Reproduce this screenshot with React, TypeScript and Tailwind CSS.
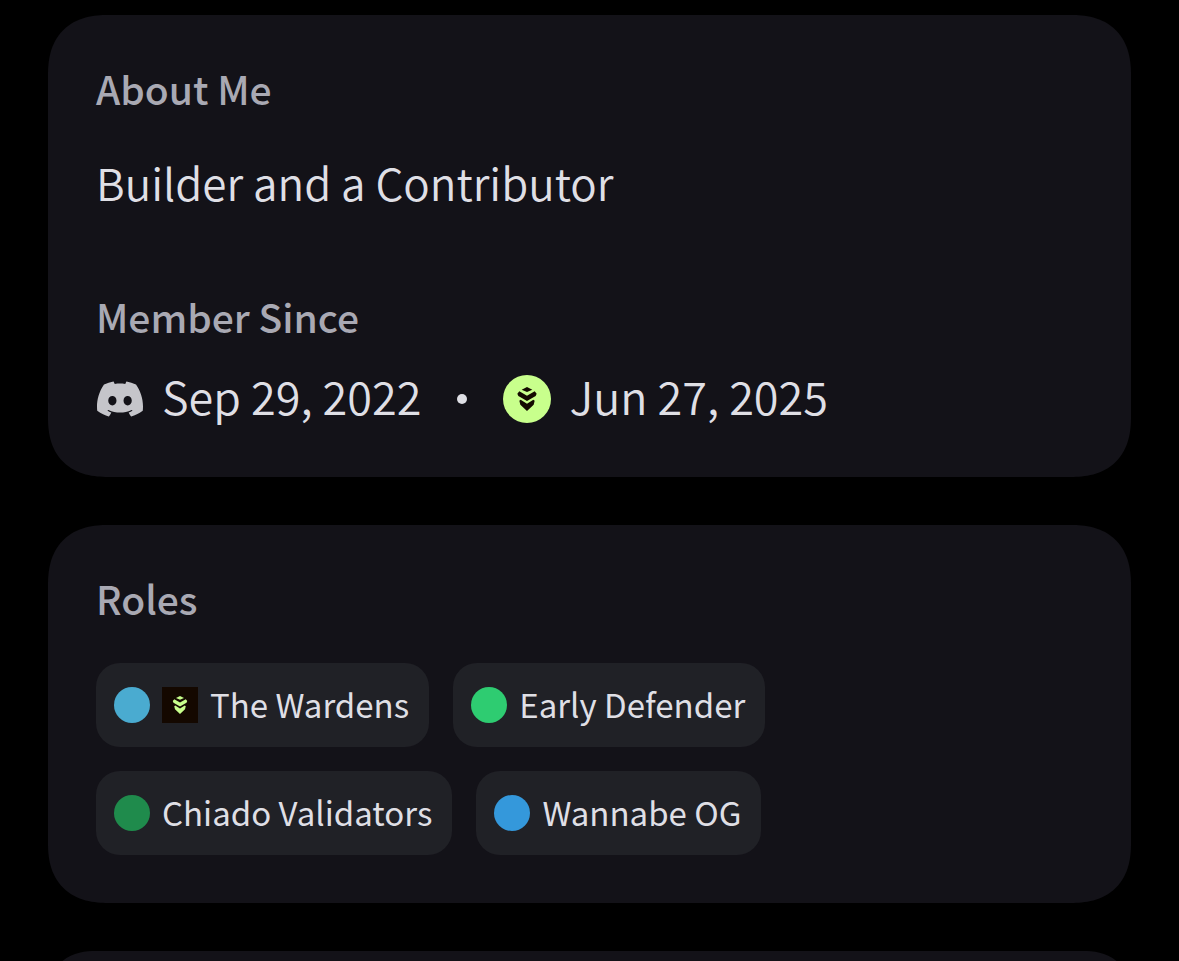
import React from "react";
import type { ReactNode } from "react";
import { SiDiscord } from "react-icons/si";

function Emblem({ className }: { className: string }) {
  return (
    <svg viewBox="24 21 144 144" className={className} fill="currentColor" aria-hidden="true">
      <path d="M96 57L112 65L96 72L80 65Z" />
      <path d="M73 70L96 83L119 70L125 77L122 84L96 99L70 84L67 77Z" />
      <path d="M77 95L96 107L115 95L119 98L116 110L96 129L76 110L73 98Z" />
    </svg>
  );
}

function Card({ children }: { children?: ReactNode }) {
  return (
    <section className="shrink-0 rounded-[60px] bg-[#131218] p-12 [corner-shape:superellipse(1.25)]">
      {children}
    </section>
  );
}

function Heading({ children }: { children: ReactNode }) {
  return <h2 className="pb-1.5 text-[39px] leading-[50px] font-medium text-[#a9a9b3]">{children}</h2>;
}

interface Role {
  name: string;
  dot: string;
  emblem?: boolean;
}

const roles: Role[] = [
  { name: "The Wardens", dot: "bg-[#4aabd0]", emblem: true },
  { name: "Early Defender", dot: "bg-[#2ecc71]" },
  { name: "Chiado Validators", dot: "bg-[#1f8b4c]" },
  { name: "Wannabe OG", dot: "bg-[#3498db]" },
];

export default function App() {
  return (
    <main className="flex h-screen flex-col gap-12 overflow-hidden bg-black px-12 pt-[15px] font-['Noto_Sans_CJK_SC',sans-serif] text-[#dfdfe5]">
      <Card>
        <Heading>About Me</Heading>
        <p className="mt-9 pb-1.5 text-[44px] leading-[54px] font-[350]">Builder and a Contributor</p>
        <div className="mt-[76px]">
          <Heading>Member Since</Heading>
        </div>
        <div className="mt-[22px] flex items-center text-[45px] leading-[54px] font-[350]">
          <SiDiscord className="mr-[18px] size-12 p-px text-[#c5c5ca]" aria-hidden="true" />
          <time className="pb-1.5" dateTime="2022-09-29">Sep 29, 2022</time>
          <span className="mx-9 size-[10px] rounded-full bg-[#dfdfe5]" />
          <span className="mr-[18px] size-12 rounded-full bg-[#c8ff8c]">
            <Emblem className="size-12 text-[#140a00]" />
          </span>
          <time className="pb-1.5" dateTime="2025-06-27">Jun 27, 2025</time>
        </div>
      </Card>

      <Card>
        <Heading>Roles</Heading>
        <ul className="mt-[34px] flex flex-wrap gap-6">
          {roles.map((role) => (
            <li key={role.name} className="flex h-[84px] items-center gap-3 rounded-3xl bg-[#202126] pr-5 pl-[18px] text-[33px] leading-[46px]">
              <span className={`size-9 rounded-full ${role.dot}`} />
              {role.emblem && (
                <span className="size-9 bg-[#140800]">
                  <Emblem className="size-9 text-[#c8ff8c]" />
                </span>
              )}
              <span className="pb-0.5">{role.name}</span>
            </li>
          ))}
        </ul>
      </Card>

      <Card />
    </main>
  );
}
